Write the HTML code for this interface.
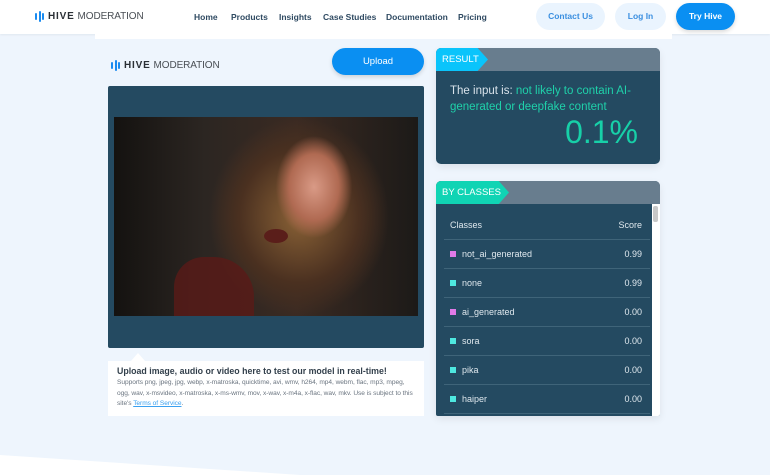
<!DOCTYPE html>
<html><head><style>
*{margin:0;padding:0;box-sizing:border-box}
body{width:770px;height:475px;overflow:hidden;background:#eef5fd;font-family:"Liberation Sans",sans-serif;position:relative}
.nav{position:absolute;left:0;top:0;width:770px;height:34px;background:#fff;box-shadow:0 1px 2px rgba(0,0,0,.06)}
.a{position:absolute;font-size:8.5px;color:#2f4a62;font-weight:bold;top:12px}
.btn{position:absolute;border-radius:14px;font-size:8.5px;text-align:center;font-weight:bold}
.logo{position:absolute;display:flex;align-items:center;font-size:10px}
.logo b{color:#2a2f35;margin-left:4px;letter-spacing:.8px}
.logo span{color:#4a4f55;margin-left:3px;letter-spacing:-.1px}
.bars{display:flex;align-items:center;gap:1.5px}
.bars i{display:block;width:2px;background:#1a8bf0;border-radius:1px}
.card{position:absolute;background:#244a61;border-radius:5px;overflow:hidden;box-shadow:0 3px 8px rgba(0,0,0,.08)}
.hd{height:23px;background:#687d8e;position:relative}
.tag{position:absolute;left:0;top:0;height:23px;color:#fff;font-size:9.5px;line-height:23px;padding-left:6px}
.row{position:absolute;left:8px;right:10px;height:29px;border-bottom:1px solid #3f6479;font-size:9px;color:#dfe8ee}
.row .n{position:absolute;left:18px;top:9px}
.row .s{position:absolute;right:8px;top:9px}
.row .sq{position:absolute;left:6px;top:11px;width:6px;height:6px}
</style></head><body>
<div class="nav">
 <div class="logo" style="left:35px;top:11px"><div class="bars"><i style="height:7px"></i><i style="height:11px"></i><i style="height:7px"></i></div><b>HIVE</b><span>MODERATION</span></div>
 <div class="a" style="left:194px">Home</div>
 <div class="a" style="left:231px">Products</div>
 <div class="a" style="left:279px">Insights</div>
 <div class="a" style="left:323px">Case Studies</div>
 <div class="a" style="left:386px">Documentation</div>
 <div class="a" style="left:458px">Pricing</div>
 <div class="btn" style="left:536px;top:3px;width:69px;height:27px;line-height:27px;background:#eaf4fe;color:#3b8fe0">Contact Us</div>
 <div class="btn" style="left:615px;top:3px;width:51px;height:27px;line-height:27px;background:#eaf4fe;color:#3b8fe0">Log In</div>
 <div class="btn" style="left:676px;top:3px;width:59px;height:27px;line-height:27px;background:#0a8ff2;color:#fff;box-shadow:0 2px 4px rgba(0,0,0,.15)">Try Hive</div>
</div>
<div style="position:absolute;left:95px;top:34px;width:577px;height:5px;background:#fff"></div>
<div class="logo" style="left:111px;top:60px"><div class="bars"><i style="height:7px"></i><i style="height:11px"></i><i style="height:7px"></i></div><b>HIVE</b><span>MODERATION</span></div>
<div class="btn" style="left:332px;top:48px;width:92px;height:27px;line-height:27px;background:#0a8ff2;color:#fff;font-weight:normal;font-size:9.5px;box-shadow:0 2px 4px rgba(0,0,0,.15)">Upload</div>
<div style="position:absolute;left:108px;top:86px;width:316px;height:262px;background:#244a61;border-radius:2px"></div>
<div style="position:absolute;left:114px;top:117px;width:304px;height:199px;overflow:hidden;background:radial-gradient(ellipse 45px 60px at 200px 70px,#d99a86,#b06a52 55%,transparent 85%),radial-gradient(ellipse 100px 110px at 185px 100px,#8a6236,#4a3020 60%,transparent 90%),linear-gradient(90deg,#141210,#2c2622 30%,#3a2a22 60%,#1c1a18)">
 <div style="position:absolute;left:150px;top:112px;width:24px;height:14px;border-radius:50%;background:#5a1e1a"></div>
 <div style="position:absolute;left:60px;top:140px;width:80px;height:60px;border-radius:30px 40px 0 0;background:#5a1a18;opacity:.8"></div>
</div>
<div style="position:absolute;left:131px;top:353px;width:0;height:0;border-left:7px solid transparent;border-right:7px solid transparent;border-bottom:8px solid #fff"></div>
<div style="position:absolute;left:108px;top:361px;width:316px;height:55px;background:#fff;padding:5px 9px">
 <div style="font-size:8.8px;font-weight:bold;color:#33404c">Upload image, audio or video here to test our model in real-time!</div>
 <div style="font-size:6.6px;color:#6b7580;line-height:10.5px;margin-top:2px;letter-spacing:-.05px">Supports png, jpeg, jpg, webp, x-matroska, quicktime, avi, wmv, h264, mp4, webm, flac, mp3, mpeg, ogg, wav, x-msvideo, x-matroska, x-ms-wmv, mov, x-wav, x-m4a, x-flac, wav, mkv. Use is subject to this site's <u style="color:#3aa0f0">Terms of Service</u>.</div>
</div>
<div class="card" style="left:436px;top:48px;width:224px;height:116px">
 <div class="hd"><div class="tag" style="width:52px;background:#0ac4fb;clip-path:polygon(0 0,80% 0,100% 50%,80% 100%,0 100%)">RESULT</div></div>
 <div style="position:absolute;left:14px;top:35px;width:200px;font-size:11.5px;line-height:16px;color:#d8e2ea">The input is: <span style="color:#1fd1aa">not likely to contain AI-generated or deepfake content</span></div>
 <div style="position:absolute;right:22px;top:66px;font-size:32px;color:#17d0a8">0.1%</div>
</div>
<div class="card" style="left:436px;top:181px;width:224px;height:235px;border-radius:5px 5px 2px 2px">
 <div class="hd"><div class="tag" style="width:73px;background:#10d4b4;clip-path:polygon(0 0,86% 0,100% 50%,86% 100%,0 100%)">BY CLASSES</div></div>
 <div style="position:absolute;right:0;top:23px;width:8px;height:212px;background:#fff"><div style="margin:2px 1px;width:5px;height:16px;background:#c8c8c8;border-radius:2px"></div></div>
 <div class="row" style="top:30px"><span style="position:absolute;left:6px;top:9px">Classes</span><span class="s">Score</span></div>
 <div class="row" style="top:59px"><i class="sq" style="background:#e07ae8"></i><span class="n">not_ai_generated</span><span class="s">0.99</span></div>
 <div class="row" style="top:88px"><i class="sq" style="background:#4ee8e0"></i><span class="n">none</span><span class="s">0.99</span></div>
 <div class="row" style="top:117px"><i class="sq" style="background:#e07ae8"></i><span class="n">ai_generated</span><span class="s">0.00</span></div>
 <div class="row" style="top:146px"><i class="sq" style="background:#4ee8e0"></i><span class="n">sora</span><span class="s">0.00</span></div>
 <div class="row" style="top:175px"><i class="sq" style="background:#4ee8e0"></i><span class="n">pika</span><span class="s">0.00</span></div>
 <div class="row" style="top:204px"><i class="sq" style="background:#4ee8e0"></i><span class="n">haiper</span><span class="s">0.00</span></div>
</div>
<div style="position:absolute;left:0;top:455px;width:300px;height:20px;background:#fff;clip-path:polygon(0 0,100% 100%,0 100%)"></div>
</body></html>
